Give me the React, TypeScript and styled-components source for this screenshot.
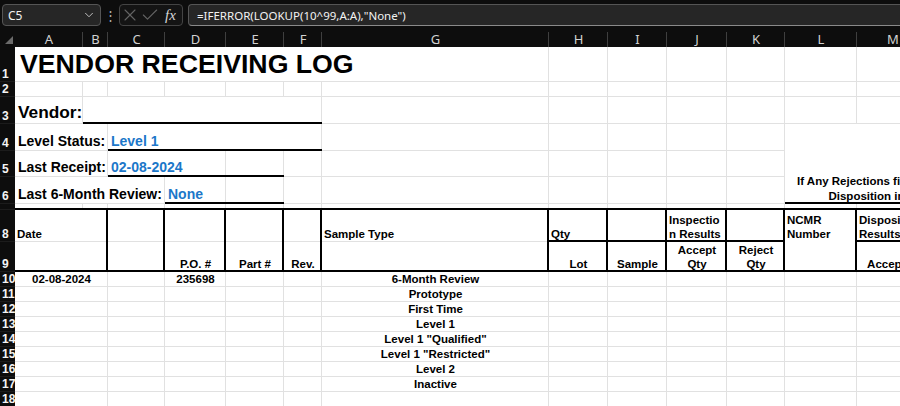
import React from 'react';
import styled, { createGlobalStyle, css } from 'styled-components';
import { Check, ChevronDown, X } from 'lucide-react';

// sheet geometry (px), A..N and rows 1..18
const COLS = ['A', 'B', 'C', 'D', 'E', 'F', 'G', 'H', 'I', 'J', 'K', 'L', 'M', 'N'];
const COL_WIDTHS = [68, 25, 57, 61, 58, 38, 227, 59, 59, 60, 58, 72, 72, 72];
const ROW_HEIGHTS = [35, 15, 27, 27, 26, 27, 6, 32, 30, 15, 15, 15, 15, 15, 15, 15, 15, 15];

const SAMPLE_TYPES = [
  '6-Month Review',
  'Prototype',
  'First Time',
  'Level 1',
  'Level 1 "Qualified"',
  'Level 1 "Restricted"',
  'Level 2',
  'Inactive',
];

type Kind = 'title' | 'vendor' | 'label' | 'value' | 'table' | 'note';
type Edge = 'g' | 'k' | 'n';
type Align = 'left' | 'center';

interface CellSpec {
  r: number;
  c: number;
  cs?: number;
  rs?: number;
  text?: string;
  kind?: Kind;
  align?: Align;
}

const SPECS: CellSpec[] = [
  { r: 1, c: 1, cs: 7, text: 'VENDOR RECEIVING LOG', kind: 'title' },
  { r: 3, c: 1, text: 'Vendor:', kind: 'vendor' },
  { r: 3, c: 2, cs: 5 },
  { r: 4, c: 1, cs: 2, text: 'Level Status:', kind: 'label' },
  { r: 4, c: 3, cs: 4, text: 'Level 1', kind: 'value' },
  {
    r: 4,
    c: 12,
    cs: 3,
    rs: 3,
    text: 'If Any Rejections fill out NCMR and\nDisposition information',
    kind: 'note',
    align: 'center',
  },
  { r: 5, c: 1, cs: 2, text: 'Last Receipt:', kind: 'label' },
  { r: 5, c: 3, cs: 2, text: '02-08-2024', kind: 'value' },
  { r: 6, c: 1, cs: 3, text: 'Last 6-Month Review:', kind: 'label' },
  { r: 6, c: 4, text: 'None', kind: 'value' },
  // header block
  { r: 8, c: 1, cs: 2, text: 'Date' },
  { r: 8, c: 7, text: 'Sample Type' },
  { r: 8, c: 8, text: 'Qty' },
  { r: 8, c: 10, text: 'Inspectio\nn Results' },
  { r: 8, c: 12, text: 'NCMR\nNumber' },
  { r: 8, c: 13, text: 'Disposition\nResults' },
  { r: 9, c: 1, cs: 2 },
  { r: 9, c: 4, text: 'P.O. #', align: 'center' },
  { r: 9, c: 5, text: 'Part #', align: 'center' },
  { r: 9, c: 6, text: 'Rev.', align: 'center' },
  { r: 9, c: 8, text: 'Lot', align: 'center' },
  { r: 9, c: 9, text: 'Sample', align: 'center' },
  { r: 9, c: 10, text: 'Accept\nQty', align: 'center' },
  { r: 9, c: 11, text: 'Reject\nQty', align: 'center' },
  { r: 9, c: 13, text: 'Accepted', align: 'center' },
  { r: 10, c: 4, text: '235698', align: 'center' },
];

// data rows: A:B merged, sample type list in G
for (let r = 10; r <= 18; r++) {
  SPECS.push({ r, c: 1, cs: 2, text: r === 10 ? '02-08-2024' : undefined, align: 'center' });
  const sample = SAMPLE_TYPES[r - 10];
  if (sample) SPECS.push({ r, c: 7, text: sample, align: 'center' });
}

const bottomEdge = (r: number, c: number, rs: number): Edge => {
  const last = r + rs - 1;
  if (last === 7 || last === 9) return 'k';
  if (last === 8) {
    if (c === 12) return 'n';
    return c >= 8 ? 'k' : 'g';
  }
  if (last === 3 && c >= 2 && c <= 6) return 'k';
  if (last === 4 && c >= 3 && c <= 6) return 'k';
  if (last === 5 && c >= 3 && c <= 5) return 'k';
  if (last === 6 && ((c >= 4 && c <= 5) || c >= 12)) return 'k';
  return 'g';
};

const rightEdge = (r: number, c: number, cs: number): Edge => {
  const end = c + cs - 1;
  if ((r === 8 || r === 9) && end >= 2 && end <= 13) return 'k';
  return 'g';
};

const buildCells = () => {
  const covered = new Set<string>();
  SPECS.forEach((s) => {
    for (let r = s.r; r < s.r + (s.rs || 1); r++)
      for (let c = s.c; c < s.c + (s.cs || 1); c++) covered.add(`${r}-${c}`);
  });
  const all: CellSpec[] = [...SPECS];
  for (let r = 1; r <= ROW_HEIGHTS.length; r++)
    for (let c = 1; c <= COLS.length; c++) if (!covered.has(`${r}-${c}`)) all.push({ r, c });
  return all;
};

const GlobalStyle = createGlobalStyle`
  html, body {
    margin: 0;
    padding: 0;
    background: #ffffff;
  }
  body {
    font-family: "Liberation Sans", Arial, sans-serif;
    overflow: hidden;
  }
`;

const Window = styled.div`
  width: 900px;
  height: 406px;
  overflow: hidden;
  display: flex;
  flex-direction: column;
  background: #ffffff;
`;

// ---- formula bar
const FormulaBar = styled.div`
  height: 27px;
  flex-shrink: 0;
  box-sizing: border-box;
  padding: 4px 0 1px 2px;
  display: flex;
  align-items: stretch;
  background: #0d0d0d;
  font-family: "Noto Sans", "Open Sans", sans-serif;
  font-size: 12px;
  color: #f2f2f2;
`;

const NameBox = styled.div`
  width: 99px;
  box-sizing: border-box;
  display: flex;
  align-items: center;
  justify-content: space-between;
  padding: 0 4px 0 5px;
  border: 1px solid #555555;
  border-radius: 4px;
  background: #262626;
`;

const Dots = styled.span`
  width: 18px;
  display: flex;
  align-items: center;
  justify-content: center;
  color: #b5b5b5;
  font-size: 13px;
`;

const FxBox = styled.div`
  width: 64px;
  box-sizing: border-box;
  display: flex;
  align-items: center;
  border: 1px solid #444444;
  border-radius: 4px;
  background: #141414;
  color: #646464;
`;

const Fx = styled.span`
  margin-left: 5px;
  font-family: "Liberation Serif", "DejaVu Serif", serif;
  font-style: italic;
  font-size: 15px;
  color: #d6d6d6;
`;

const FormulaInput = styled.div`
  flex: 1;
  margin-left: 5px;
  padding-left: 8px;
  display: flex;
  align-items: center;
  border: 1px solid #555555;
  border-bottom-color: #8a8a8a;
  border-right: none;
  border-radius: 4px 0 0 4px;
  background: #262626;
  font-size: 11.5px;
  white-space: nowrap;
`;

// ---- grid
const Sheet = styled.div`
  display: grid;
  grid-template-columns: 15px ${COL_WIDTHS.map((w) => `${w}px`).join(' ')};
  grid-template-rows: 20px ${ROW_HEIGHTS.map((h) => `${h}px`).join(' ')};
  overflow: hidden;
  background: #ffffff;
`;

const Corner = styled.div`
  grid-row: 1;
  grid-column: 1;
  display: flex;
  align-items: flex-end;
  justify-content: flex-end;
  padding: 0 2px 3px 0;
  background: #0d0d0d;
`;

const ColHead = styled.div<{ $col: number }>`
  grid-row: 1;
  grid-column: ${(p) => p.$col};
  display: flex;
  align-items: flex-end;
  justify-content: center;
  background: linear-gradient(#3f3f3f, #3f3f3f) right 5px / 1px 15px no-repeat, #0d0d0d;
  color: #d2d2d2;
  font-family: "Noto Sans", "Open Sans", sans-serif;
  font-size: 13px;
  line-height: 16px;
`;

const RowHead = styled.div<{ $row: number }>`
  grid-row: ${(p) => p.$row};
  grid-column: 1;
  display: flex;
  align-items: flex-end;
  padding: 0 0 1px 2px;
  overflow: hidden;
  background: #0d0d0d;
  box-shadow: inset 0 -1px 0 #1c1c1c;
  color: #f4f4f4;
  font-family: "Liberation Sans Narrow", "Liberation Sans", sans-serif;
  font-weight: 700;
  font-size: 12px;
  line-height: 13px;
`;

const edgeShadow = (br: Edge, bb: Edge) => {
  const parts: string[] = [];
  if (bb === 'k') parts.push('inset 0 -2px 0 #000000');
  if (br === 'k') parts.push('inset -2px 0 0 #000000');
  if (bb === 'g') parts.push('inset 0 -1px 0 #e1e1e1');
  if (br === 'g') parts.push('inset -1px 0 0 #e1e1e1');
  return parts.length ? parts.join(', ') : 'none';
};

const kindStyles: Record<Kind, ReturnType<typeof css>> = {
  title: css`
    font-size: 26.7px;
    line-height: 30px;
    padding: 0 2px 3px 5px;
  `,
  vendor: css`
    font-size: 17.3px;
    line-height: 20px;
    padding: 0 2px 2px 3px;
  `,
  label: css`
    font-size: 14px;
    line-height: 16px;
    padding: 0 2px 2px 3px;
  `,
  value: css`
    font-size: 14px;
    line-height: 16px;
    padding: 0 2px 2px 3px;
    color: #1c77c9;
  `,
  table: css`
    font-size: 11.5px;
    line-height: 14px;
    padding: 0 2px 1px 2px;
  `,
  note: css`
    font-size: 11.5px;
    line-height: 15px;
    padding: 0 2px 0 2px;
  `,
};

const Cell = styled.div<{
  $r: number;
  $c: number;
  $cs: number;
  $rs: number;
  $br: Edge;
  $bb: Edge;
  $align: Align;
  $kind: Kind;
}>`
  grid-row: ${(p) => p.$r} / span ${(p) => p.$rs};
  grid-column: ${(p) => p.$c} / span ${(p) => p.$cs};
  min-width: 0;
  display: flex;
  flex-direction: column;
  justify-content: flex-end;
  overflow: hidden;
  white-space: pre;
  text-align: ${(p) => p.$align};
  font-weight: 700;
  color: #000000;
  box-shadow: ${(p) => edgeShadow(p.$br, p.$bb)};
  ${(p) => kindStyles[p.$kind]}
`;

const App = () => {
  const cells = buildCells();
  return (
    <>
      <GlobalStyle />
      <Window>
        <FormulaBar>
          <NameBox>
            C5
            <ChevronDown size={14} color="#c8c8c8" strokeWidth={1.6} />
          </NameBox>
          <Dots>⋮</Dots>
          <FxBox>
            <X size={20} strokeWidth={1.3} />
            <Check size={20} strokeWidth={1.3} />
            <Fx>fx</Fx>
          </FxBox>
          <FormulaInput>=IFERROR(LOOKUP(10^99,A:A),"None")</FormulaInput>
        </FormulaBar>

        <Sheet>
          <Corner>
            <svg width="8" height="8" viewBox="0 0 8 8">
              <polygon points="8,0 8,8 0,8" fill="#6b6b6b" />
            </svg>
          </Corner>
          {COLS.map((letter, i) => (
            <ColHead key={letter} $col={i + 2}>
              {letter}
            </ColHead>
          ))}
          {ROW_HEIGHTS.map((h, i) => (
            <RowHead key={i} $row={i + 2}>
              {h >= 10 ? i + 1 : null}
            </RowHead>
          ))}
          {cells.map((cell) => {
            const cs = cell.cs || 1;
            const rs = cell.rs || 1;
            return (
              <Cell
                key={`${cell.r}-${cell.c}`}
                $r={cell.r + 1}
                $c={cell.c + 1}
                $cs={cs}
                $rs={rs}
                $br={rightEdge(cell.r, cell.c, cs)}
                $bb={bottomEdge(cell.r, cell.c, rs)}
                $align={cell.align || 'left'}
                $kind={cell.kind || 'table'}
              >
                {cell.text}
              </Cell>
            );
          })}
        </Sheet>
      </Window>
    </>
  );
};

export default App;
